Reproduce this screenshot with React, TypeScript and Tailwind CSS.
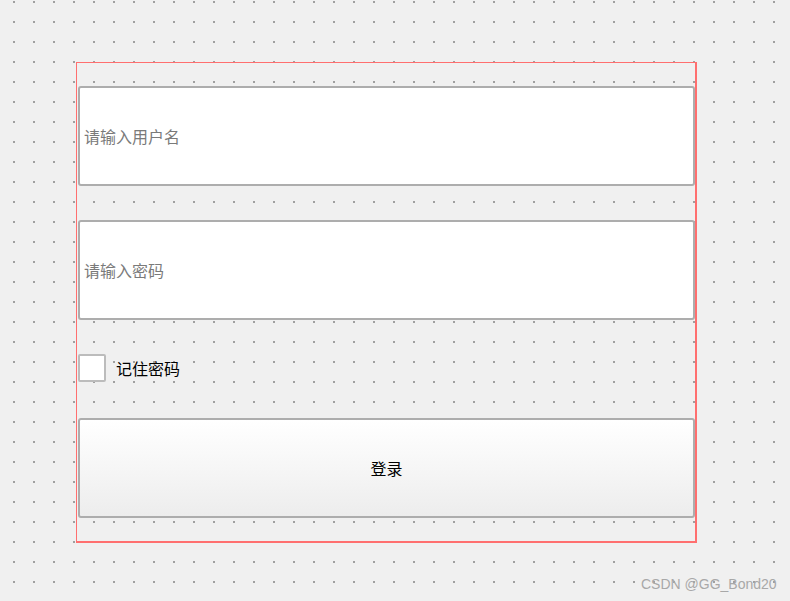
import React from "react";

const App = () => {
  return (
    <div className="relative h-[601px] w-[790px] overflow-hidden bg-[#f0f0f0] bg-[conic-gradient(from_270deg_at_2px_2px,#a0a0a0_25%,transparent_0)] bg-size-[20px_20px] bg-position-[13px_1px] pt-[62px] font-['Noto_Sans_CJK_SC',sans-serif] text-[16px]">
      <div className="ml-[76px] flex h-[481px] w-[621px] flex-col border border-r-2 border-b-2 border-[#ff6f6f] pl-px pt-[23px]">
        <input
          className="h-[100px] w-[617px] rounded-[3px] border-2 border-[#adadad] bg-white pl-[4px] text-black outline-none placeholder:text-[#7a7a7a]"
          placeholder="请输入用户名"
        />
        <input
          className="mt-[34px] h-[100px] w-[617px] rounded-[3px] border-2 border-[#adadad] bg-white pl-[4px] text-black outline-none placeholder:text-[#7a7a7a]"
          placeholder="请输入密码"
        />
        <label className="mt-[34px] flex h-[28px] items-center gap-[10px] text-black">
          <span className="h-[28px] w-[28px] rounded-[2px] border-2 border-[#bcbcbc] bg-white"></span>
          <span>记住密码</span>
        </label>
        <button className="mt-[36px] h-[100px] w-[617px] rounded-[3px] border-2 border-[#adadad] bg-linear-to-b from-white to-[#ededed] text-black">
          登录
        </button>
      </div>

      <div className="absolute left-[641px] top-[574px] font-['Liberation_Sans',sans-serif] text-[14px] text-[#a8a8a8]">
        CSDN @GG_Bond20
      </div>
    </div>
  );
};

export default App;
